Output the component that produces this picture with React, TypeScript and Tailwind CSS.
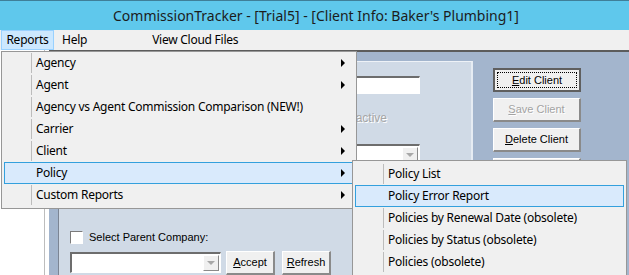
import React from "react";

const menuItems = [
  { label: "Agency", sub: true },
  { label: "Agent", sub: true },
  { label: "Agency vs Agent Commission Comparison (NEW!)", sub: false },
  { label: "Carrier", sub: true },
  { label: "Client", sub: true },
  { label: "Policy", sub: true, active: true },
  { label: "Custom Reports", sub: true },
];

const policyItems = [
  { label: "Policy List" },
  { label: "Policy Error Report", active: true },
  { label: "Policies by Renewal Date (obsolete)" },
  { label: "Policies by Status (obsolete)" },
  { label: "Policies (obsolete)" },
];

function Arrow() {
  return <span className="w-0 h-0 border-y-[4px] border-y-transparent border-l-[4px] border-l-black" />;
}

function WinButton({
  children,
  focused,
  disabled,
  className = "",
}: {
  children: React.ReactNode;
  focused?: boolean;
  disabled?: boolean;
  className?: string;
}) {
  if (focused) {
    return (
      <div className={`h-[24px] border-2 border-[#5f5f5f] bg-[#f0f0f0] p-[2px] ${className}`}>
        <div className="h-full border border-dotted border-black flex items-center justify-center">
          {children}
        </div>
      </div>
    );
  }
  return (
    <div
      className={`h-[24px] bg-[#f0f0f0] border-t border-l border-t-white border-l-white border-r-2 border-b-2 border-r-[#8a8a8a] border-b-[#8a8a8a] flex items-center justify-center ${
        disabled ? "text-[#a3a3a3] [text-shadow:1px_1px_0_#fff]" : "text-black"
      } ${className}`}
    >
      {children}
    </div>
  );
}

function Combo({ className = "" }: { className?: string }) {
  return (
    <div className={`bg-white border-t-2 border-l-2 border-t-[#6d6d6d] border-l-[#6d6d6d] border-b border-r border-b-white border-r-white flex justify-end items-stretch p-[1px] ${className}`}>
      <div className="w-[16px] bg-[#f0f0f0] border-t border-l border-white border-r border-b border-r-[#8a8a8a] border-b-[#8a8a8a] flex items-center justify-center">
        <span className="w-0 h-0 border-x-[4px] border-x-transparent border-t-[4px] border-t-[#a8a8a8]" />
      </div>
    </div>
  );
}

export default function App() {
  return (
    <div className="w-[629px] h-[275px] overflow-hidden relative bg-[#f0f0f0] font-['Noto_Sans',sans-serif] text-black">
      {/* title bar */}
      <div className="h-[30px] bg-[#5fc8ec] border-t border-[#3f7f99] flex items-center justify-center text-[14px] text-[#1c1c1c] pl-[3px]">
        CommissionTracker - [Trial5] - [Client Info: Baker's Plumbing1]
      </div>

      {/* menu bar */}
      <div className="h-[20px] flex items-center text-[12px] tracking-[-0.25px]">
        <div className="ml-[1px] h-[20px] w-[53px] bg-[#cce8ff] border border-[#99d1ff] flex items-center justify-center">
          Reports
        </div>
        <div className="ml-[8px]">Help</div>
        <div className="ml-[65px]">View Cloud Files</div>
      </div>

      {/* body */}
      <div className="flex h-[225px] font-['Liberation_Sans',sans-serif] text-[11px]">
        <div className="w-[49px] bg-white">
          <div className="w-[45px] h-full border-r border-[#bdbdbd]" />
        </div>
        <div className="flex-1 bg-[#a3b5cd] border-t-2 border-[#5c5c5c] flex pl-[9px] pt-[9px]">
          {/* panel */}
          <div className="w-[415px] bg-[#d0dae6] border-l border-[#7c8594] border-t border-t-[#eef2f7] border-r-2 border-r-[#e6ecf3] flex flex-col">
            <div className="mt-[14px] flex justify-end pr-[51px]">
              <div className="w-[250px] h-[18px] bg-white border-t-2 border-l-2 border-t-[#6d6d6d] border-l-[#6d6d6d] border-b border-r border-b-white border-r-white" />
            </div>
            <div className="mt-[15px] flex justify-end pr-[84px] items-center gap-[5px] text-[#a6a6a6] [text-shadow:1px_1px_0_#fff] text-[12px]">
              <span className="w-[12px] h-[12px] bg-[#f0f0f0] border border-[#a0a0a0]" />
              <span>Inactive</span>
            </div>
            <div className="mt-[17px] flex justify-end pr-[51px]">
              <Combo className="w-[250px] h-[20px]" />
            </div>
            <div className="mt-[65px] ml-[11px] flex items-center gap-[6px] text-[11px]">
              <span className="w-[13px] h-[13px] bg-white border-t border-l border-[#7a7a7a] border-b border-r border-b-white border-r-white" />
              <span>Select Parent Company:</span>
            </div>
            <div className="mt-[5px] ml-[11px] flex items-center">
              <Combo className="w-[151px] h-[21px]" />
              <WinButton className="w-[49px] ml-[5px] text-[11px]">
                <span><u>A</u>ccept</span>
              </WinButton>
              <WinButton className="w-[49px] ml-[7px] text-[11px]">
                <span><u>R</u>efresh</span>
              </WinButton>
            </div>
          </div>

          {/* buttons */}
          <div className="ml-[20px] mt-[7px] flex flex-col gap-[6px] text-[11px]">
            <WinButton focused className="w-[88px]">
              <span><u>E</u>dit Client</span>
            </WinButton>
            <WinButton disabled className="w-[88px]">
              <span><u>S</u>ave Client</span>
            </WinButton>
            <WinButton className="w-[88px]">
              <span><u>D</u>elete Client</span>
            </WinButton>
            <WinButton className="w-[88px]">
              <span>Clients</span>
            </WinButton>
          </div>
        </div>
      </div>

      {/* Reports dropdown */}
      <div className="absolute left-[1px] top-[51px] w-[356px] bg-[#f0f0f0] border border-[#979797] pb-[2px] text-[12px] tracking-[-0.25px]">
        {menuItems.map((it) => (
          <div
            key={it.label}
            className={`relative h-[22px] mx-[2px] flex items-center pr-[8px] border ${
              it.active ? "bg-[#d9eafc] border-[#33a0dd]" : "border-transparent"
            }`}
          >
            <span className={`w-[27px] self-stretch mr-[4px] ${it.active ? "" : "border-r border-[#bcbcbc]"}`} />
            <span className="flex-1">{it.label}</span>
            {it.sub && <Arrow />}
          </div>
        ))}
      </div>

      {/* Policy submenu */}
      <div className="absolute left-[352px] top-[160px] w-[275px] h-[130px] bg-[#f0f0f0] border border-[#979797] pt-[2px] text-[12px] tracking-[-0.25px]">
        {policyItems.map((it) => (
          <div
            key={it.label}
            className={`relative h-[22px] mx-[2px] flex items-center border ${
              it.active ? "bg-[#d9eafc] border-[#33a0dd]" : "border-transparent"
            }`}
          >
            <span className={`w-[28px] self-stretch mr-[4px] ${it.active ? "" : "border-r border-[#bcbcbc]"}`} />
            {it.label}
          </div>
        ))}
      </div>
    </div>
  );
}
